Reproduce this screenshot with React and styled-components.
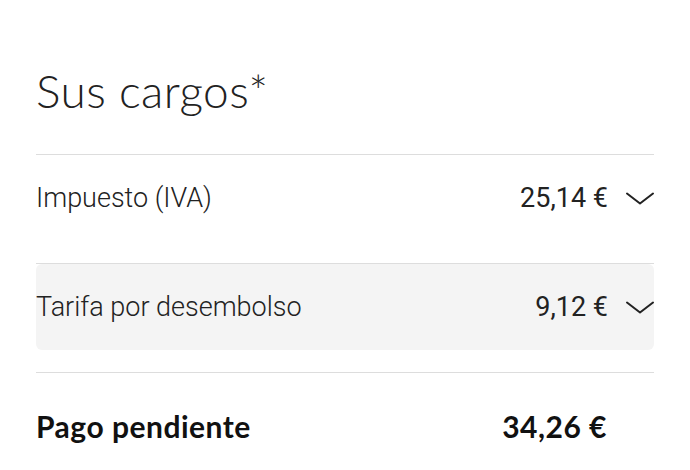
import React from 'react';
import styled, { createGlobalStyle } from 'styled-components';

const GlobalStyle = createGlobalStyle`
  body {
    margin: 0;
    background: #ffffff;
    color: #222222;
  }
`;

const charges = [
  { id: 'iva', label: 'Impuesto (IVA)', amount: '25,14 €', active: false },
  { id: 'fee', label: 'Tarifa por desembolso', amount: '9,12 €', active: true },
];

function Chevron() {
  return (
    <svg width="28" height="13" viewBox="0 0 28 13" fill="none">
      <path d="M1 1.5 L14 11.5 L27 1.5" stroke="#222" strokeWidth="2" strokeLinecap="round" strokeLinejoin="round" />
    </svg>
  );
}

export default function App() {
  return (
    <Page>
      <GlobalStyle />
      <Title>Sus cargos*</Title>
      <List>
        {charges.map((c) => (
          <Item key={c.id}>
            <ItemHeader active={c.active}>
              <Label>{c.label}</Label>
              <Right>
                <Amount>{c.amount}</Amount>
                <Chevron />
              </Right>
            </ItemHeader>
          </Item>
        ))}
      </List>
      <Total>
        <TotalText>Pago pendiente</TotalText>
        <TotalText>34,26 €</TotalText>
      </Total>
    </Page>
  );
}

const Page = styled.div`
  width: 618px;
  padding: 0 36px;
`;

const Title = styled.h1`
  margin: 0;
  box-sizing: border-box;
  height: 155px;
  padding-top: 64px;
  font-family: Lato, 'Open Sans', sans-serif;
  font-weight: 300;
  font-size: 46px;
  letter-spacing: 0.4px;
  line-height: 54px;
  color: #222222;
  border-bottom: 1px solid #dddddd;
`;

const List = styled.div`
  display: flex;
  flex-direction: column;
`;

const Item = styled.div`
  padding-bottom: 22px;
  border-bottom: 1px solid #dddddd;
`;

const ItemHeader = styled.div`
  height: 86px;
  display: flex;
  align-items: center;
  justify-content: space-between;
  border-radius: 6px;
  background: ${(p) => (p.active ? '#f4f4f4' : 'transparent')};
`;

const Label = styled.span`
  font-family: Roboto, sans-serif;
  font-weight: 300;
  font-size: 27px;
  color: #222222;
`;

const Right = styled.div`
  display: flex;
  align-items: center;
  gap: 18px;
`;

const Amount = styled.span`
  font-family: Roboto, sans-serif;
  font-weight: 400;
  font-size: 27px;
  color: #222222;
`;

const Total = styled.div`
  height: 106px;
  display: flex;
  align-items: center;
  justify-content: space-between;
  padding-right: 47px;
`;

const TotalText = styled.span`
  font-family: Lato, 'Open Sans', sans-serif;
  font-weight: 700;
  font-size: 30px;
  letter-spacing: 0.5px;
  color: #111111;
`;
